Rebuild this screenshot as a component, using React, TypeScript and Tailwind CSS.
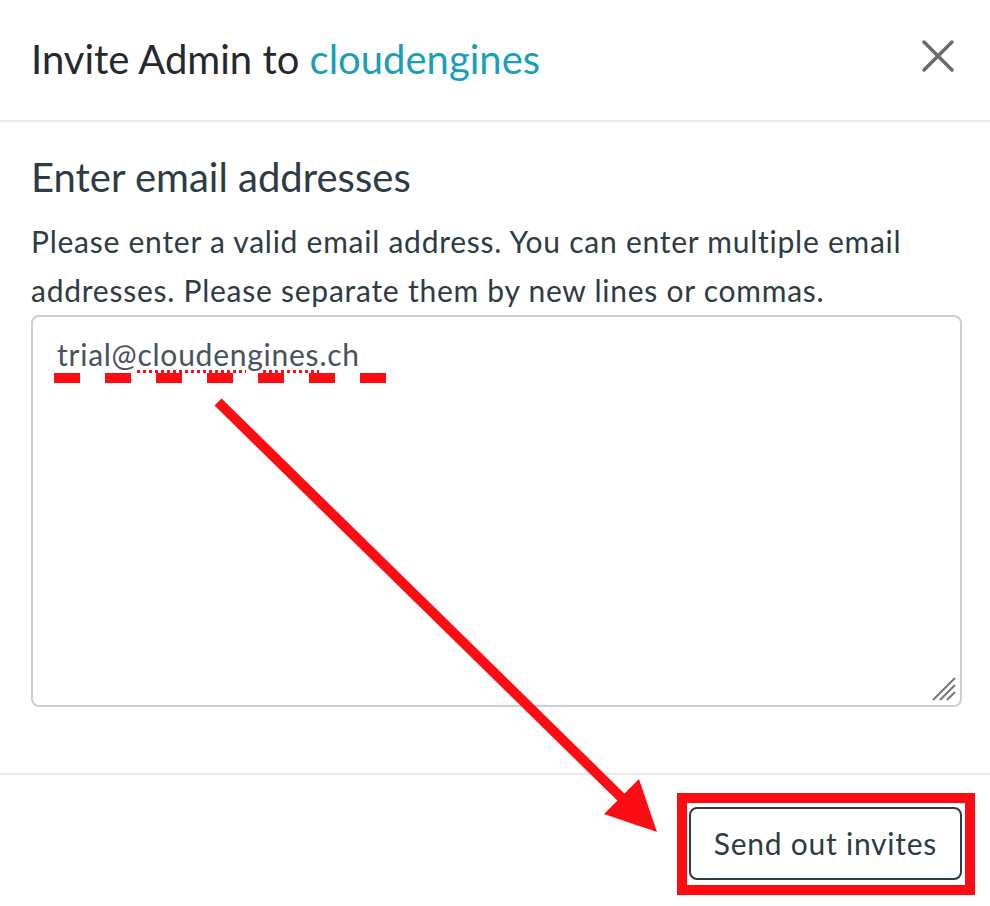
import { X } from 'lucide-react';

function Annotations() {
  // red markup drawn on top of the dialog
  return (
    <svg className="pointer-events-none absolute inset-0" width="990" height="906" viewBox="0 0 990 906">
      <line x1="54" y1="378" x2="386" y2="378" stroke="#fe0c13" strokeWidth="10" strokeDasharray="26 25" />
      <line x1="218" y1="402" x2="630" y2="806" stroke="#fe0c13" strokeWidth="10" />
      <polygon points="657,832 639,779 604,814" fill="#fe0c13" />
    </svg>
  );
}

function ResizeHandle() {
  return (
    <svg className="absolute bottom-[3px] right-[3px]" width="26" height="26" viewBox="0 0 26 26">
      <line x1="2" y1="24" x2="24" y2="2" stroke="#777" strokeWidth="2" />
      <line x1="9" y1="24" x2="24" y2="9" stroke="#777" strokeWidth="2" />
      <line x1="16" y1="24" x2="24" y2="16" stroke="#777" strokeWidth="2" />
    </svg>
  );
}

export default function App() {
  return (
    <div className="relative w-[990px] h-[906px] bg-white text-[#2d3b45] overflow-hidden" style={{ fontFamily: 'Lato, "Open Sans", sans-serif' }}>
      <div className="flex items-center justify-between h-[122px] pl-[31px] pr-[24px] pb-[3px] border-b-2 border-[#e8eaec]">
        <h1 className="text-[40px] text-[#25292e]">
          Invite Admin to <span className="text-[#1a9fb9]">cloudengines</span>
        </h1>
        <button type="button" className="mb-[6px] text-[#6b6b6b]">
          <X size={56} strokeWidth={1.5} />
        </button>
      </div>

      <div className="pl-[31px] pr-[28px] pt-[31px] pb-[66px] border-b-2 border-[#e8eaec]">
        <h2 className="text-[40px] leading-[48px]">Enter email addresses</h2>
        <p className="mt-[16px] text-[30px] leading-[49px] tracking-[0.75px]">
          Please enter a valid email address. You can enter multiple email addresses. Please separate them by new lines or commas.
        </p>
        <div className="relative h-[392px] border-2 border-[#c9cfd4] rounded-[8px] pl-[24px] pt-[17px] text-[30px] leading-[40px] tracking-[0.75px] text-[#48525e]">
          trial@
          <span className="underline decoration-dotted decoration-[#fe0c13] decoration-[3px] underline-offset-[4px]">cloudengines</span>
          .ch
          <ResizeHandle />
        </div>
      </div>

      <div className="flex justify-end pt-[18px] pr-[15px]">
        <div className="border-[10px] border-[#fe0c13] pl-[2px] pr-[3px] pt-[4px] pb-[5px]">
          <button type="button" className="h-[73px] px-[23px] border-2 border-[#2d3b45] rounded-[8px] text-[30px] tracking-[0.75px] text-[#2d3b45]">
            Send out invites
          </button>
        </div>
      </div>

      <Annotations />
    </div>
  );
}
